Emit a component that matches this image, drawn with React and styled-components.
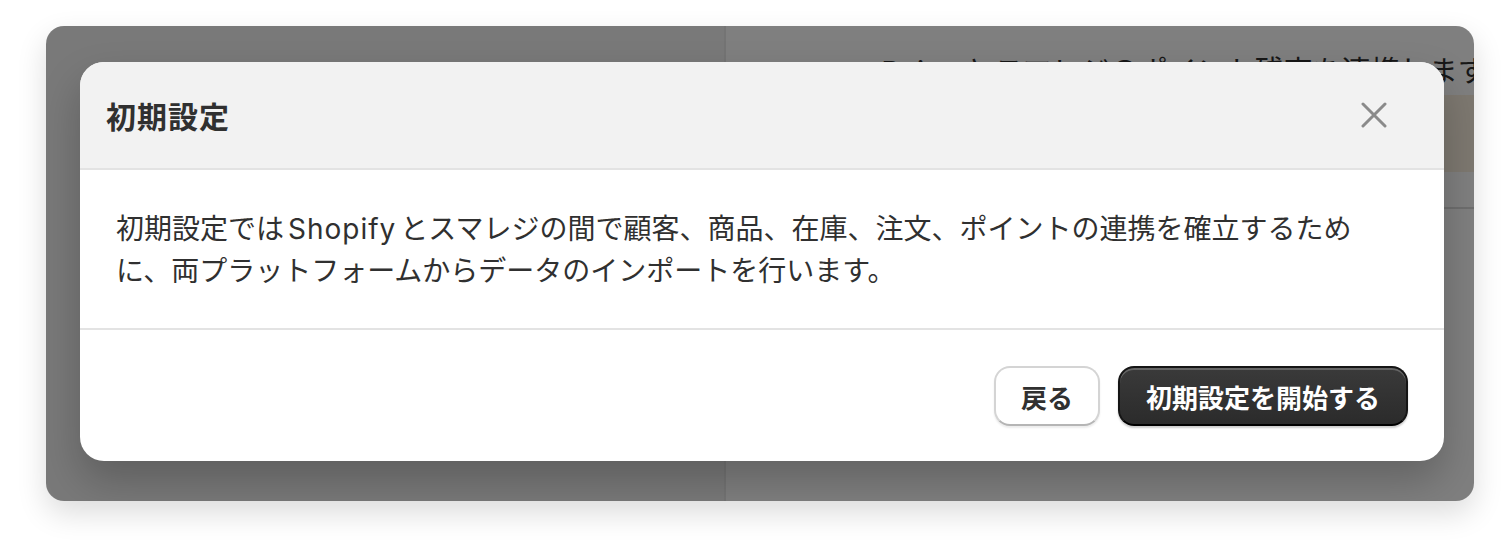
import React from 'react';
import styled, { createGlobalStyle } from 'styled-components';

const GlobalStyle = createGlobalStyle`
  html, body {
    margin: 0;
    background: #ffffff;
  }
  body {
    font-family: Inter, "Noto Sans CJK JP", sans-serif;
    color: #303030;
  }
`;

const Stage = styled.div`
  padding: 26px 34px 55px 46px;
`;

const Frame = styled.div`
  position: relative;
  width: 1428px;
  height: 475px;
  border-radius: 18px;
  overflow: hidden;
  box-shadow: 0 12px 30px rgba(0, 0, 0, 0.14);
  display: grid;
  grid-template-columns: 680px 1fr;
  background: #ffffff;
`;

const SideColumn = styled.div`
  background: #f3f3f3;
  border-right: 2px solid #e9e9e9;
`;

const MainColumn = styled.div`
  display: flex;
  flex-direction: column;
`;

const Lead = styled.p`
  margin: 0;
  padding: 22px 0 0 90px;
  height: 47px;
  font-size: 29px;
  color: #2e2e2e;
  white-space: nowrap;
`;

const Notice = styled.div`
  height: 77px;
  background: #faf0e0;
`;

const Rule = styled.div`
  margin-top: 35px;
  height: 2px;
  background: #dcdcdc;
`;

const Backdrop = styled.div`
  position: absolute;
  inset: 0;
  background: rgba(0, 0, 0, 0.5);
  padding: 36px 30px 0 34px;
`;

const Modal = styled.div`
  width: 1364px;
  background: #ffffff;
  border-radius: 24px;
  overflow: hidden;
  box-shadow: 0 20px 40px rgba(0, 0, 0, 0.22);
`;

const Header = styled.div`
  height: 106px;
  display: flex;
  align-items: center;
  justify-content: space-between;
  padding: 0 48px 0 26px;
  background: #f2f2f2;
  border-bottom: 2px solid #e3e3e3;
`;

const Title = styled.h2`
  margin: 0;
  font-size: 30px;
  font-weight: 700;
  color: #303030;
  letter-spacing: 1px;
`;

const CloseButton = styled.button`
  width: 44px;
  height: 44px;
  border: none;
  background: transparent;
  display: flex;
  align-items: center;
  justify-content: center;
  padding: 0;
  cursor: pointer;
`;

const Body = styled.div`
  padding: 38px 36px 36px;
  border-bottom: 2px solid #e3e3e3;
  font-size: 28px;
  line-height: 42px;
  color: #303030;
`;

const Brand = styled.span`
  margin: 0 4px;
  letter-spacing: 1px;
`;

const Footer = styled.div`
  display: flex;
  justify-content: flex-end;
  gap: 18px;
  padding: 36px 36px 35px;
`;

const Button = styled.button`
  height: 60px;
  padding: 0 ${(p) => (p.$primary ? '26px' : '25px')};
  border-radius: 16px;
  font-family: inherit;
  font-size: 26px;
  font-weight: 700;
  cursor: pointer;
  color: ${(p) => (p.$primary ? '#ffffff' : '#303030')};
  background: ${(p) =>
    p.$primary ? 'linear-gradient(#3a3a3a, #2b2b2b)' : '#ffffff'};
  border: 2px solid ${(p) => (p.$primary ? '#151515' : '#d4d4d4')};
  border-bottom-color: ${(p) => (p.$primary ? '#000000' : '#b5b5b5')};
  box-shadow: ${(p) =>
    p.$primary
      ? 'inset 0 2px 0 rgba(255,255,255,0.22), 0 2px 2px rgba(0,0,0,0.2)'
      : '0 2px 2px rgba(0,0,0,0.08)'};
`;

function CloseIcon() {
  return (
    <svg width="26" height="26" viewBox="0 0 26 26" fill="none">
      <path
        d="M2 2 L24 24 M24 2 L2 24"
        stroke="#8a8a8a"
        strokeWidth="3"
        strokeLinecap="round"
      />
    </svg>
  );
}

export default function App() {
  return (
    <>
      <GlobalStyle />
      <Stage>
        <Frame>
          <SideColumn />
          <MainColumn>
            <Lead>easyPointsとスマレジのポイント残高を連携します</Lead>
            <Notice />
            <Rule />
          </MainColumn>
          <Backdrop>
            <Modal>
              <Header>
                <Title>初期設定</Title>
                <CloseButton aria-label="閉じる">
                  <CloseIcon />
                </CloseButton>
              </Header>
              <Body>
                初期設定では<Brand>Shopify</Brand>とスマレジの間で顧客、商品、在庫、注文、ポイントの連携を確立するため
                <br />
                に、両プラットフォームからデータのインポートを行います。
              </Body>
              <Footer>
                <Button>戻る</Button>
                <Button $primary>初期設定を開始する</Button>
              </Footer>
            </Modal>
          </Backdrop>
        </Frame>
      </Stage>
    </>
  );
}
